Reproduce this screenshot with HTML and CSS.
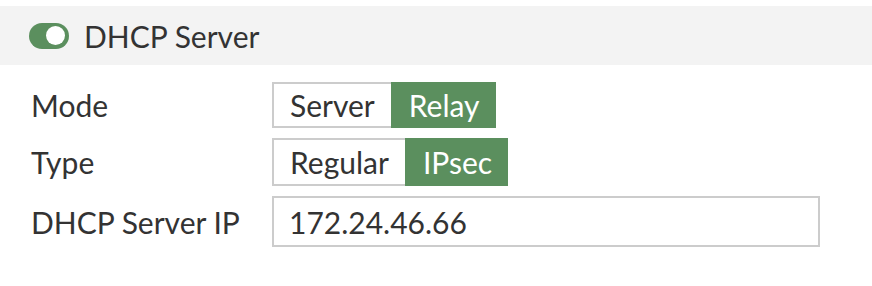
FILE: index.html
```html
<!DOCTYPE html>
<html lang="en">
<head>
    <meta charset="UTF-8">
    <title>DHCP Server</title>
    <link rel="stylesheet" href="styles.css">
</head>
<body>
    <div class="section-header">
        <span class="toggle"><span class="knob"></span></span>
        <span class="section-title">DHCP Server</span>
    </div>

    <div class="form">
        <div class="form-row">
            <label class="form-label">Mode</label>
            <div class="btn-group">
                <button type="button" class="seg">Server</button>
                <button type="button" class="seg active">Relay</button>
            </div>
        </div>
        <div class="form-row row-type">
            <label class="form-label">Type</label>
            <div class="btn-group">
                <button type="button" class="seg">Regular</button>
                <button type="button" class="seg active">IPsec</button>
            </div>
        </div>
        <div class="form-row">
            <label class="form-label" for="server-ip">DHCP Server IP</label>
            <input type="text" id="server-ip" class="text-input" value="172.24.46.66">
        </div>
    </div>
</body>
</html>
```

FILE: styles.css
```css
body {
    margin: 0;
    font-family: Lato, "Open Sans", sans-serif;
    color: #333;
    background-color: #fff;
}
.section-header {
    display: flex;
    align-items: center;
    margin-top: 6px;
    height: 59px;
    padding-left: 29px;
    background-color: #f3f3f3;
}
.toggle {
    display: flex;
    align-items: center;
    justify-content: flex-end;
    width: 40px;
    height: 26px;
    padding: 0 4px;
    box-sizing: border-box;
    border-radius: 13px;
    background-color: #5b8f5e;
}
.knob {
    width: 19px;
    height: 19px;
    border-radius: 50%;
    background-color: #fff;
}
.section-title {
    margin-left: 15px;
    font-size: 30px;
}
.form {
    padding: 17px 0 0 31px;
}
.form-row {
    display: flex;
    align-items: center;
    margin-bottom: 10px;
}
.row-type {
    margin-top: 1px;
}
.form-label {
    width: 241px;
    font-size: 30px;
}
.btn-group {
    display: flex;
}
.seg {
    height: 46px;
    padding: 0 16px;
    font-family: inherit;
    font-size: 30px;
    color: #333;
    background-color: #fff;
    border: 2px solid #ccc;
    border-right: none;
    border-radius: 0;
}
.row-type .seg {
    height: 48px;
}
.seg.active {
    color: #fff;
    background-color: #5b8f5e;
    border-color: #5b8f5e;
}
.text-input {
    width: 548px;
    height: 51px;
    padding: 0 15px;
    box-sizing: border-box;
    font-family: inherit;
    font-size: 30px;
    color: #333;
    border: 2px solid #ccc;
    border-radius: 0;
}
```
